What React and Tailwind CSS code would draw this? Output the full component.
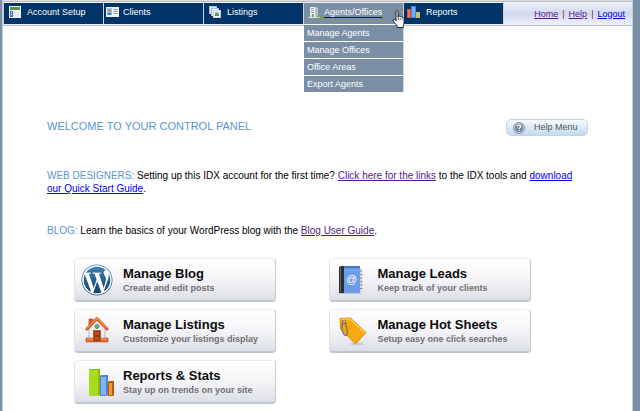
import React from "react";
import { FaWordpress } from "react-icons/fa";

const AccountIcon = () => (
    <svg width="12" height="12" viewBox="0 0 12 12" aria-hidden="true">
        <rect width="12" height="12" fill="#f4f7fb" />
        <rect x="1" y="1" width="10" height="3" fill="#4f9a3c" />
        <rect x="1" y="5" width="3" height="6" fill="#3f74b8" />
        <path d="M2 6h1v1H2zM2 8h1v1H2z" fill="#fff" />
        <path d="M5 6h5M5 8h5M5 10h5" stroke="#d5dce6" strokeWidth="1" />
    </svg>
);

const ClientsIcon = () => (
    <svg width="13" height="11" viewBox="0 0 13 11" aria-hidden="true">
        <rect y="1" width="13" height="10" fill="#eef2f7" />
        <rect x="1" y="2" width="5" height="7" fill="#9fc3ea" />
        <circle cx="3.5" cy="4.5" r="1.6" fill="#d08a55" />
        <path d="M1.5 9c0-3 4-3 4 0z" fill="#4a78b5" />
        <path d="M7.5 3.5h4M7.5 5.5h4M7.5 7.5h4" stroke="#8796aa" strokeWidth="1" />
    </svg>
);

const ListingsIcon = () => (
    <svg width="12" height="12" viewBox="0 0 12 12" aria-hidden="true">
        <rect x="0.5" y="0.5" width="7" height="7" fill="#dbe8f5" stroke="#a9c2dc" />
        <rect x="2.5" y="2.5" width="7" height="7" fill="#eef4fa" stroke="#a9c2dc" />
        <rect x="4.5" y="4.5" width="7" height="7" fill="#fff" stroke="#c8d6e4" />
        <rect x="6" y="6" width="4" height="4" fill="#7cb8ec" />
        <path d="M6 10V8l2-1 2 2v1z" fill="#4f9e2e" />
    </svg>
);

const OfficesIcon = () => (
    <svg width="12" height="12" viewBox="0 0 12 12" aria-hidden="true">
        <path d="M2 1h5v10H2z" fill="#eef1f4" />
        <path d="M7 1l3 1v9H7z" fill="#c3ccd5" />
        <path d="M3 2.5h3M3 4.5h3M3 6.5h3" stroke="#93a5b8" />
        <path d="M8 3.5h1M8 5.5h1M8 7.5h1" stroke="#8595a6" />
        <path d="M4 8h2v3H4z" fill="#8595a6" />
        <path d="M0 11h12v1H0z" fill="#dfe3e6" />
        <circle cx="1.5" cy="10" r="1.3" fill="#78ad4d" />
        <circle cx="10.3" cy="10" r="1.6" fill="#78ad4d" />
    </svg>
);

const ReportsIcon = () => (
    <svg width="13" height="12" viewBox="0 0 13 12" aria-hidden="true">
        <rect x="0.5" y="3.5" width="3" height="8" fill="#f0785a" stroke="#e24d33" />
        <rect x="4.5" y="0.5" width="4" height="11" fill="#74b1f2" stroke="#3c82d6" />
        <rect x="9.5" y="6.5" width="3" height="5" fill="#a9cf62" stroke="#d8b860" />
    </svg>
);

const BlogIcon = () => (
    <svg width="34" height="34" viewBox="0 0 34 34" aria-hidden="true">
        <defs>
            <linearGradient id="wp" x1="0" y1="0" x2="0" y2="1">
                <stop offset="0" stopColor="#3f86bd" />
                <stop offset="1" stopColor="#123c64" />
            </linearGradient>
        </defs>
        <circle cx="17" cy="17" r="16" fill="#fff" />
        <FaWordpress x="1" y="1" size={32} fill="url(#wp)" />
    </svg>
);

const HouseIcon = () => (
    <svg width="34" height="34" viewBox="0 0 34 34" aria-hidden="true">
        <path d="M9 5h4v7H9z" fill="#d9622c" stroke="#9a5030" strokeWidth="0.7" />
        <path d="M9 13l8-8 8 8v14H9z" fill="#eceded" stroke="#a9abad" strokeWidth="0.8" />
        <path d="M7 15L17 4.5 27 15" fill="none" stroke="#c94e1c" strokeWidth="3" strokeLinejoin="round" strokeLinecap="round" />
        <path d="M7 14.6L17 4.2l10 10.4" fill="none" stroke="#f5965a" strokeWidth="1.3" strokeLinejoin="round" />
        <circle cx="17" cy="12.5" r="2" fill="#79b24d" stroke="#5b7dab" />
        <path d="M6 24h22v4H6z" fill="#de6a36" stroke="#b44c20" strokeWidth="0.6" />
        <path d="M7 25h20" stroke="#f2a071" strokeWidth="1" />
        <path d="M13.5 16.5h7v11h-7z" fill="#8b3a14" stroke="#c8572a" />
        <path d="M15 18h4v3h-4zM15 23h4v3h-4z" fill="#b25526" />
    </svg>
);

const StatsIcon = () => (
    <svg width="34" height="34" viewBox="0 0 34 34" aria-hidden="true">
        <path d="M9 5l1-1h10v26l-2 1H9z" fill="#86bc10" />
        <path d="M9 5h9v26H9z" fill="#a8dc1c" />
        <path d="M20 11l1-1h7v20l-2 1h-6z" fill="#4f83cf" />
        <path d="M21 12h5v18h-5z" fill="#84b3f3" />
        <path d="M28 17l1-1h5v14l-1 1h-5z" fill="#b8560a" />
        <path d="M29 18h3v12h-3z" fill="#f39a2c" />
    </svg>
);

const LeadsIcon = () => (
    <svg width="34" height="34" viewBox="0 0 34 34" aria-hidden="true">
        <path d="M4 30.5h23" stroke="#c2c5cc" strokeWidth="1" />
        <path d="M24 5l2 1v22l-2 1z" fill="#f5f5f5" stroke="#9ea4ad" strokeWidth="0.7" />
        <path d="M24.5 8h3M24.5 11.5h3M24.5 15h3M24.5 18.5h3M24.5 22h3M24.5 25.5h3" stroke="#8b919b" />
        <path d="M6 4l2-1h17v27H6z" fill="#6d9ce6" />
        <path d="M8 3h17v2H8z" fill="#4874c0" />
        <path d="M9 7.5h15" stroke="#8fb6f0" strokeWidth="1" strokeDasharray="1 1" />
        <path d="M4 4l2-1h3v27H4z" fill="#2b2f38" />
        <path d="M5.5 4v25" stroke="#626874" />
        <text x="16.5" y="19.5" textAnchor="middle" fill="#fff" fontFamily="Liberation Sans, sans-serif" fontSize="11">@</text>
    </svg>
);

const TagIcon = () => (
    <svg width="34" height="34" viewBox="0 0 34 34" aria-hidden="true">
        <ellipse cx="22" cy="30" rx="7" ry="1.5" fill="#c8cad0" />
        <path d="M5 4.5L15.5 4 31 18.5 20.5 30 5.5 15z" fill="#f6a80c" stroke="#e08e06" strokeLinejoin="round" />
        <path d="M6.5 5.5L15 5l14.5 13.5" fill="none" stroke="#ffd25a" strokeWidth="1.2" />
        <circle cx="9" cy="8" r="1.7" fill="#fff" stroke="#a4700c" />
        <path d="M8.5 7.5c-3 4-1 14 2.5 14 2.500-1 1-10-1.500-13.500" fill="none" stroke="#6f6f6f" strokeWidth="1.3" />
    </svg>
);

const HandCursor = () => (
    <svg width="14" height="18" viewBox="0 0 14 18" aria-hidden="true">
        <path
            d="M4 1.500c0-1.300 2-1.300 2 0V7l.3-.8c.6-.7 1.800-.3 1.900.7.600-.7 1.800-.3 1.900.6.700-.5 2 0 2 1.100V12c0 2-1 3-1 5.500H5.500C5 15 3 13.500 1.200 11c-.9-1.300.6-2.300 1.600-1.300L4 11z"
            fill="#fff"
            stroke="#222"
            strokeLinejoin="round"
        />
        <path d="M6.2 7v3M8.2 8v2M10.2 8.5V10" stroke="#222" strokeWidth="0.7" />
    </svg>
);

const menu = [
    { label: "Account Setup", icon: <AccountIcon />, style: "pl-[5px] gap-[6px]" },
    { label: "Clients", icon: <ClientsIcon />, style: "pl-[2px] gap-[4px]" },
    { label: "Listings", icon: <ListingsIcon />, style: "pl-[5px] gap-[6px]" },
    {
        label: "Agents/Offices",
        icon: <OfficesIcon />,
        style: "pl-[4px] gap-[4px]",
        items: ["Manage Agents", "Manage Offices", "Office Areas", "Export Agents"],
    },
    { label: "Reports", icon: <ReportsIcon />, style: "pl-[3px] gap-[6px]" },
];

const cards = [
    { title: "Manage Blog", text: "Create and edit posts", icon: <BlogIcon /> },
    { title: "Manage Leads", text: "Keep track of your clients", icon: <LeadsIcon /> },
    { title: "Manage Listings", text: "Customize your listings display", icon: <HouseIcon /> },
    { title: "Manage Hot Sheets", text: "Setup easy one click searches", icon: <TagIcon /> },
    { title: "Reports & Stats", text: "Stay up on trends on your site", icon: <StatsIcon /> },
];

const MenuItem = ({ entry }) => (
    <li className="relative w-[100px] border-r border-[#c9d3e0]">
        <a
            href="#"
            className={`flex h-[21px] items-start pt-[3px] text-[9px] leading-[12px] text-white ${entry.style} ${entry.items ? "bg-[#7a8fa5]" : "bg-[#003366]"}`}
        >
            {entry.icon}
            <span className={entry.items ? "underline decoration-[#0000ff] underline-offset-2 [text-decoration-skip-ink:none]" : ""}>{entry.label}</span>
        </a>
        {entry.items && (
            <>
                <ul className="absolute top-full left-0 z-10 w-[100px] border-r border-[#c9d3e0] bg-white">
                    {entry.items.map((item) => (
                        <li key={item} className="border-t border-white bg-[#7a8fa5]">
                            <a href="#" className="block px-[3px] py-[2px] text-[9px] leading-[12px] text-white">{item}</a>
                        </li>
                    ))}
                </ul>
                <span className="pointer-events-none absolute top-[7px] left-[88px] z-20">
                    <HandCursor />
                </span>
            </>
        )}
    </li>
);

const Header = () => (
    <header className="border-t border-[#dedede]">
        <div className="flex items-center justify-between border-y border-[#b8bfca] bg-linear-to-b from-[#f0f2fa] via-[#d2d9ee] to-[#eef1fb]">
            <ul className="flex border-l border-[#c9d3e0] py-px">
                {menu.map((entry) => (
                    <MenuItem key={entry.label} entry={entry} />
                ))}
            </ul>
            <nav className="flex gap-[4px] pr-[7px] text-[9px] leading-[12px] text-[#663333]">
                <a href="#" className="text-[#551a8b] underline">Home</a>
                <span>|</span>
                <a href="#" className="text-[#551a8b] underline">Help</a>
                <span>|</span>
                <a href="#" className="text-[#0000ee] underline">Logout</a>
            </nav>
        </div>
    </header>
);

const Card = ({ card }) => (
    <button
        type="button"
        className="flex h-[44px] w-[202px] items-center gap-[9px] rounded-[4px] border border-t-[#ededf0] border-r-[#c6c9d3] border-b-2 border-b-[#c0c4cf] border-l-[#e2e3e8] bg-linear-to-b from-white via-[#f5f5f8] to-[#dddfe7] pl-[5px] text-left"
    >
        {card.icon}
        <span className="flex flex-col">
            <span className="text-[13px] leading-[16px] font-bold text-[#0c0c0c]">{card.title}</span>
            <span className="text-[9px] leading-[12px] font-bold text-[#707070]">{card.text}</span>
        </span>
    </button>
);

const App = () => {
    return (
        <div className="flex min-h-screen border-r-[7px] border-l-2 border-[#7a8fa8] bg-white font-['Liberation_Sans',Arial,sans-serif]">
            <div className="flex-1 border-x border-[#c3cad4]">
                <Header />
                <main className="px-11 pt-[93px] text-[10px] leading-[13px] text-black">
                    <div className="flex items-start justify-between">
                        <h1 className="text-[11px] leading-[14px] text-[#5b96cf]">WELCOME TO YOUR CONTROL PANEL</h1>
                        <button
                            type="button"
                            className="flex h-[17px] w-[82px] items-center gap-[9px] rounded-[5px] border border-[#c5d3e2] bg-linear-to-b from-[#f7fafd] to-[#c3daf0] pl-[6px] text-[9px] text-[#555]"
                        >
                            <svg width="12" height="12" viewBox="0 0 12 12" aria-hidden="true">
                                <circle cx="6" cy="6" r="5.5" fill="#c8d0d9" stroke="#8997a8" />
                                <circle cx="6" cy="6" r="4" fill="#71859c" />
                                <path d="M4.5 4.8c0-2.200 3.200-2 3.200-.2 0 1.200-1.600 1.100-1.600 2.400M6.100 8v1" fill="none" stroke="#fff" strokeWidth="1.2" />
                            </svg>
                            Help Menu
                        </button>
                    </div>
                    <p className="mt-[33px]">
                        <span className="text-[#5b96cf]">WEB DESIGNERS:</span> Setting up this IDX account for the first time?{" "}
                        <a href="#" className="text-[#551a8b] underline">Click here for the links</a> to the IDX tools and{" "}
                        <a href="#" className="text-[#0000ee] underline">
                            <span>download</span> <span>our Quick Start Guide</span>
                        </a>.
                    </p>
                    <p className="mt-[29px]">
                        <span className="text-[#5b96cf]">BLOG:</span> Learn the basics of your WordPress blog with the{" "}
                        <a href="#" className="text-[#551a8b] underline">Blog User Guide</a>.
                    </p>
                    <div className="mt-[21px] grid grid-cols-2 gap-y-[7px] pr-[5px] pb-[7px] pl-[27px]">
                        {cards.map((card) => (
                            <Card key={card.title} card={card} />
                        ))}
                    </div>
                </main>
            </div>
        </div>
    );
};

export default App;
